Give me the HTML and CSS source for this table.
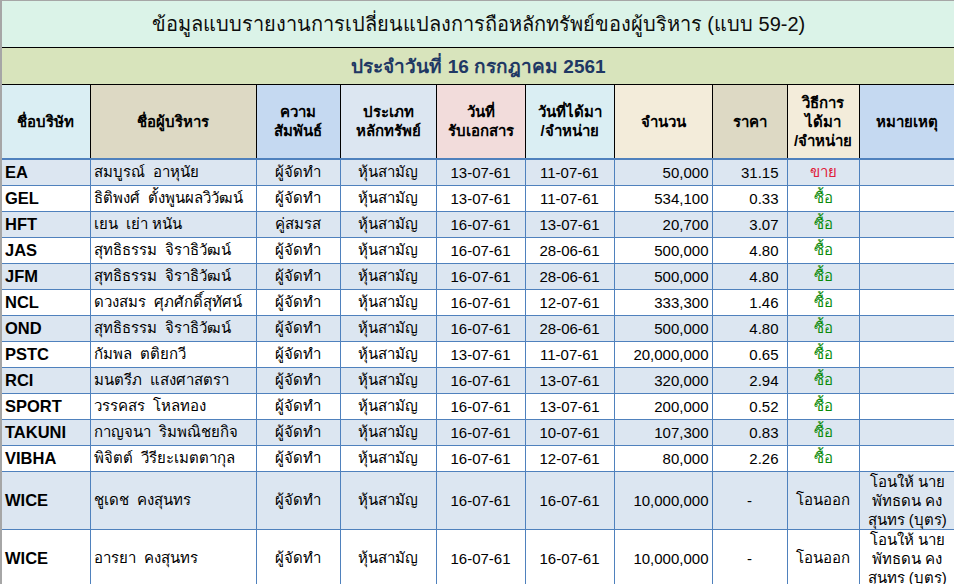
FILE: index.html
```html
<!DOCTYPE html>
<html lang="th">
<head>
<meta charset="utf-8">
<title>59-2</title>
<link rel="stylesheet" href="styles.css">
</head>
<body>
<div class="sheet">
<table class="grid">
<colgroup>
<col class="c1"><col class="c2"><col class="c3"><col class="c4"><col class="c5"><col class="c6"><col class="c7"><col class="c8"><col class="c9"><col class="c10">
</colgroup>
<tr class="title"><td colspan="10">ข้อมูลแบบรายงานการเปลี่ยนแปลงการถือหลักทรัพย์ของผู้บริหาร (แบบ 59-2)</td></tr>
<tr class="sub"><td colspan="10">ประจำวันที่ 16 กรกฎาคม 2561</td></tr>
<tr class="head">
<th class="h1">ชื่อบริษัท</th>
<th class="h2">ชื่อผู้บริหาร</th>
<th class="h3">ความ<br>สัมพันธ์</th>
<th class="h4">ประเภท<br>หลักทรัพย์</th>
<th class="h5">วันที่<br>รับเอกสาร</th>
<th class="h6">วันที่ได้มา<br>/จำหน่าย</th>
<th class="h7">จำนวน</th>
<th class="h8">ราคา</th>
<th class="h9">วิธีการ<br>ได้มา<br>/จำหน่าย</th>
<th class="h10">หมายเหตุ</th>
</tr>
<tr class="row alt"><td class="co">EA</td><td class="nm">สมบูรณ์&nbsp; อาหุนัย</td><td class="ct">ผู้จัดทำ</td><td class="ct">หุ้นสามัญ</td><td class="ct">13-07-61</td><td class="ct">11-07-61</td><td class="num">50,000</td><td class="pr">31.15</td><td class="ct sell">ขาย</td><td></td></tr>
<tr class="row"><td class="co">GEL</td><td class="nm">ธิติพงศ์&nbsp; ตั้งพูนผลวิวัฒน์</td><td class="ct">ผู้จัดทำ</td><td class="ct">หุ้นสามัญ</td><td class="ct">13-07-61</td><td class="ct">11-07-61</td><td class="num">534,100</td><td class="pr">0.33</td><td class="ct buy">ซื้อ</td><td></td></tr>
<tr class="row alt"><td class="co">HFT</td><td class="nm">เยน&nbsp; เย่า หนัน</td><td class="ct">คู่สมรส</td><td class="ct">หุ้นสามัญ</td><td class="ct">16-07-61</td><td class="ct">13-07-61</td><td class="num">20,700</td><td class="pr">3.07</td><td class="ct buy">ซื้อ</td><td></td></tr>
<tr class="row"><td class="co">JAS</td><td class="nm">สุทธิธรรม&nbsp; จิราธิวัฒน์</td><td class="ct">ผู้จัดทำ</td><td class="ct">หุ้นสามัญ</td><td class="ct">16-07-61</td><td class="ct">28-06-61</td><td class="num">500,000</td><td class="pr">4.80</td><td class="ct buy">ซื้อ</td><td></td></tr>
<tr class="row alt"><td class="co">JFM</td><td class="nm">สุทธิธรรม&nbsp; จิราธิวัฒน์</td><td class="ct">ผู้จัดทำ</td><td class="ct">หุ้นสามัญ</td><td class="ct">16-07-61</td><td class="ct">28-06-61</td><td class="num">500,000</td><td class="pr">4.80</td><td class="ct buy">ซื้อ</td><td></td></tr>
<tr class="row"><td class="co">NCL</td><td class="nm">ดวงสมร&nbsp; ศุภศักดิ์สุทัศน์</td><td class="ct">ผู้จัดทำ</td><td class="ct">หุ้นสามัญ</td><td class="ct">16-07-61</td><td class="ct">12-07-61</td><td class="num">333,300</td><td class="pr">1.46</td><td class="ct buy">ซื้อ</td><td></td></tr>
<tr class="row alt"><td class="co">OND</td><td class="nm">สุทธิธรรม&nbsp; จิราธิวัฒน์</td><td class="ct">ผู้จัดทำ</td><td class="ct">หุ้นสามัญ</td><td class="ct">16-07-61</td><td class="ct">28-06-61</td><td class="num">500,000</td><td class="pr">4.80</td><td class="ct buy">ซื้อ</td><td></td></tr>
<tr class="row"><td class="co">PSTC</td><td class="nm">กัมพล&nbsp; ตติยกวี</td><td class="ct">ผู้จัดทำ</td><td class="ct">หุ้นสามัญ</td><td class="ct">13-07-61</td><td class="ct">11-07-61</td><td class="num">20,000,000</td><td class="pr">0.65</td><td class="ct buy">ซื้อ</td><td></td></tr>
<tr class="row alt"><td class="co">RCI</td><td class="nm">มนตรีภ&nbsp; แสงศาสตรา</td><td class="ct">ผู้จัดทำ</td><td class="ct">หุ้นสามัญ</td><td class="ct">16-07-61</td><td class="ct">13-07-61</td><td class="num">320,000</td><td class="pr">2.94</td><td class="ct buy">ซื้อ</td><td></td></tr>
<tr class="row"><td class="co">SPORT</td><td class="nm">วรรคสร&nbsp; โหลทอง</td><td class="ct">ผู้จัดทำ</td><td class="ct">หุ้นสามัญ</td><td class="ct">16-07-61</td><td class="ct">13-07-61</td><td class="num">200,000</td><td class="pr">0.52</td><td class="ct buy">ซื้อ</td><td></td></tr>
<tr class="row alt"><td class="co">TAKUNI</td><td class="nm">กาญจนา&nbsp; ริมพณิชยกิจ</td><td class="ct">ผู้จัดทำ</td><td class="ct">หุ้นสามัญ</td><td class="ct">16-07-61</td><td class="ct">10-07-61</td><td class="num">107,300</td><td class="pr">0.83</td><td class="ct buy">ซื้อ</td><td></td></tr>
<tr class="row"><td class="co">VIBHA</td><td class="nm">พิจิตต์&nbsp; วีรียะเมตตากุล</td><td class="ct">ผู้จัดทำ</td><td class="ct">หุ้นสามัญ</td><td class="ct">16-07-61</td><td class="ct">12-07-61</td><td class="num">80,000</td><td class="pr">2.26</td><td class="ct buy">ซื้อ</td><td></td></tr>
<tr class="row tall alt"><td class="co">WICE</td><td class="nm">ชูเดช&nbsp; คงสุนทร</td><td class="ct">ผู้จัดทำ</td><td class="ct">หุ้นสามัญ</td><td class="ct">16-07-61</td><td class="ct">16-07-61</td><td class="num">10,000,000</td><td class="ct">-</td><td class="ct">โอนออก</td><td class="note">โอนให้ นาย<br>พัทธดน คง<br>สุนทร (บุตร)</td></tr>
<tr class="row tall"><td class="co">WICE</td><td class="nm">อารยา&nbsp; คงสุนทร</td><td class="ct">ผู้จัดทำ</td><td class="ct">หุ้นสามัญ</td><td class="ct">16-07-61</td><td class="ct">16-07-61</td><td class="num">10,000,000</td><td class="ct">-</td><td class="ct">โอนออก</td><td class="note">โอนให้ นาย<br>พัทธดน คง<br>สุนทร (บุตร)</td></tr>
</table>
</div>
</body>
</html>
```
FILE: styles.css
```css
html, body {
  margin: 0;
  padding: 0;
  background: #ffffff;
}
body {
  font-family: "Liberation Sans", "Noto Sans", "DejaVu Sans", sans-serif;
  color: #000;
  overflow: hidden;
}
.sheet {
  width: 954px;
  height: 584px;
  overflow: hidden;
  border-top: 1px solid #a6a6a6;
  border-left: 2px solid #a6a6a6;
  box-sizing: border-box;
}
.grid {
  border-collapse: collapse;
  table-layout: fixed;
  width: 953px;
}
.c1 { width: 88px; }
.c2 { width: 166px; }
.c3 { width: 84px; }
.c4 { width: 96px; }
.c5 { width: 89px; }
.c6 { width: 89px; }
.c7 { width: 98px; }
.c8 { width: 75px; }
.c9 { width: 72px; }
.c10 { width: 96px; }

.grid td, .grid th {
  padding: 0;
  overflow: hidden;
  white-space: nowrap;
}
.title { height: 46px; }
.title td {
  background: #dbf3e8;
  text-align: center;
  font-size: 20px;
  border-bottom: 1px solid #000;
  color: #0d0d0d;
}
.sub { height: 37px; }
.sub td {
  background: #d8e4bc;
  text-align: center;
  font-size: 19px;
  font-weight: bold;
  color: #1f3864;
  border-bottom: 1px solid #000;
}
.head { height: 75px; }
.head th {
  font-size: 15px;
  font-weight: bold;
  text-align: center;
  line-height: 19px;
  border-right: 1px solid #000;
  border-bottom: 2px solid #4f81bd;
}
.head th:last-child { border-right: none; }
.h1 { background: #daeef3; }
.h2 { background: #ddd9c4; }
.h3 { background: #c5d9f1; }
.h4 { background: #dce6f1; }
.h5 { background: #f2dcdb; }
.h6 { background: #daeef3; }
.h7 { background: #f3ecda; }
.h8 { background: #ddd9c4; }
.h9 { background: #f3ecda; }
.h10 { background: #c5d9f1; }

.row { height: 26px; }
.row td {
  font-size: 15px;
  border-right: 1px solid #4f81bd;
  border-bottom: 1px solid #4f81bd;
}
.row td:last-child { border-right: none; }
.row.alt td { background: #dce6f1; }
.row.tall { height: 57px; }
.co {
  font-weight: bold;
  padding-left: 3px !important;
  font-size: 16.5px !important;
}
.nm { padding-left: 3px !important; }
.ct { text-align: center; }
.num { text-align: right; padding-right: 3px !important; }
.pr { text-align: right; padding-right: 8px !important; }
.sell { color: #e0203a; }
.buy { color: #0a8a0a; }
.note {
  text-align: center;
  white-space: normal !important;
  line-height: 19px;
}
```
